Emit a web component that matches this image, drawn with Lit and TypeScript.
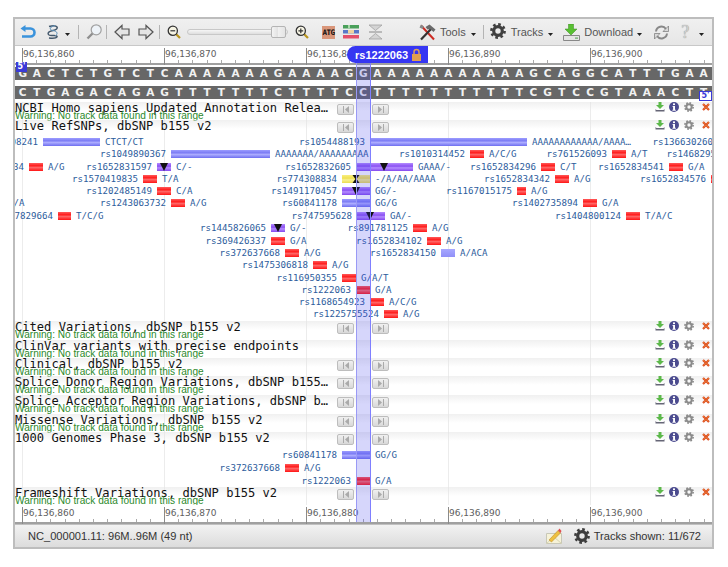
import {LitElement, html, css, nothing} from 'lit';
import {customElement, property} from 'lit/decorators.js';

const TOP = 'GACTCTGTCTCAAAAAAAGAAAAGGAAAAAAAAAAAGCAGGCATTTGAA';
const PAIR: Record<string, string> = {A: 'T', T: 'A', G: 'C', C: 'G'};
const BOTTOM = [...TOP].map((c) => PAIR[c]).join('');

const caret = html`<svg class="caret" width="5" height="3" viewBox="0 0 5 3"><path d="M0 0H5L2.5 3Z" fill="#222" /></svg>`;

const gear = (size: number, color: string) => html`<svg width=${size} height=${size} viewBox="0 0 16 16">
  <circle cx="8" cy="8" r="6.6" fill="none" stroke=${color} stroke-width="2.6" stroke-dasharray="2.6 2.58" />
  <circle cx="8" cy="8" r="4.3" fill="none" stroke=${color} stroke-width="3.2" />
</svg>`;

// small icons on the right of a track header
const actions = html`<div class="actions">
  <svg width="10" height="10" viewBox="0 0 10 10">
    <path d="M3.5 0H6.5V3H9L5 7 1 3H3.5Z" fill="#5cb84a" />
    <path d="M0.5 7V9.5H9.5V7L8.5 8H1.5Z" fill="#667" />
  </svg>
  <svg class="a-info" width="10" height="10" viewBox="0 0 10 10">
    <circle cx="5" cy="5" r="5" fill="#4b4b8f" />
    <rect x="4" y="1.4" width="2" height="1.7" fill="#fff" />
    <path d="M3.6 4H6V7.8H6.8V8.8H3.4V7.8H4.1V5H3.6Z" fill="#fff" />
  </svg>
  <span class="a-gear">${gear(10, '#8a8a8a')}</span>
  <svg class="a-close" width="8" height="8" viewBox="0 0 8 8">
    <path d="M1 1L7 7M7 1L1 7" stroke="#dd4a20" stroke-width="2.2" />
    <path d="M1 1L7 7M7 1L1 7" stroke="#f0b040" stroke-width="0.7" stroke-dasharray="1 1" />
  </svg>
</div>`;

@customElement('gv-ruler')
export class GvRuler extends LitElement {
  static override styles = css`
    :host {
      display: block;
      height: 19px;
      background: #fff;
    }
    .scale {
      display: flex;
      height: 17px;
      padding-left: 7px;
      border-bottom: 2px solid #a0a0a0;
      background: repeating-linear-gradient(90deg, #aaa 0 1px, transparent 1px 14.2px) 7px 100% / 100% 3px no-repeat;
    }
    .major {
      flex: none;
      width: 142px;
      box-sizing: border-box;
      margin-top: 2px;
      height: 17px;
      border-left: 1px solid #8a8a8a;
      font: 9px/12px 'DejaVu Sans', sans-serif;
      color: #5e5e5e;
    }
  `;

  override render() {
    const labels = ['96,136,860', '96,136,870', '96,136,880', '96,136,890', '96,136,900'];
    return html`<div class="scale">${labels.map((l) => html`<div class="major">${l}</div>`)}</div>`;
  }
}

type Feature = {y: number; name?: string; end?: number; x1?: number; x2?: number; color?: string; label?: string; lx?: number; mark?: string; mx?: number};

const bar = (y: number, name: string, end: number, x2: number, color: string, label: string, mark?: string, mx?: number): Feature => ({
  y, name, end, x1: end + 5, x2, color, label, lx: x2 + 5, mark, mx,
});

const LIVE: Feature[] = [
  bar(142, 'rs1068808241', 38, 100, 'blue', 'CTCT/CT'),
  bar(142, 'rs1054488193', 365, 527, 'blue', 'AAAAAAAAAAAA/AAAA…'),
  {y: 142, name: 'rs136630260', end: 713},
  bar(154, 'rs1049890367', 166, 270, 'blue', 'AAAAAAA/AAAAAAAAA'),
  bar(154, 'rs1010314452', 465, 484, 'red', 'A/C/G'),
  bar(154, 'rs761526093', 607, 626, 'red', 'A/T'),
  {y: 154, name: 'rs146829510', end: 727},
  bar(167, 'rs934', 24, 43, 'red', 'A/G'),
  bar(167, 'rs1652831597', 152, 171, 'purple', 'C/-', 'down', 164),
  bar(167, 'rs1652832605', 351, 413, 'purple', 'GAAA/-', 'down', 384),
  bar(167, 'rs1652834296', 536, 555, 'red', 'C/T'),
  bar(167, 'rs1652834541', 664, 683, 'red', 'G/A'),
  bar(179, 'rs1570419835', 138, 157, 'red', 'T/A'),
  bar(179, 'rs774308834', 337, 370, 'yellow', '-/A/AA/AAAA', 'hour', 356),
  bar(179, 'rs1652834342', 550, 569, 'red', 'A/G'),
  bar(179, 'rs1652834576', 706, 725, 'red', ''),
  bar(191, 'rs1202485149', 152, 171, 'red', 'C/A'),
  bar(191, 'rs1491170457', 337, 370, 'purple', 'GG/-', 'down', 356),
  bar(191, 'rs1167015175', 512, 526, 'red', 'A/G'),
  {y: 203, label: 'T/A', lx: 8},
  bar(203, 'rs1243063732', 166, 185, 'red', 'A/G'),
  bar(203, 'rs60841178', 337, 370, 'blue', 'GG/G'),
  bar(203, 'rs1402735894', 578, 597, 'red', 'G/A'),
  bar(216, 'rs1317829664', 53, 71, 'red', 'T/C/G'),
  bar(216, 'rs747595628', 352, 385, 'purple', 'GA/-', 'down', 370),
  bar(216, 'rs1404800124', 621, 640, 'red', 'T/A/C'),
  bar(228, 'rs1445826065', 266, 285, 'purple', 'G/-', 'down', 278),
  bar(228, 'rs891781125', 408, 427, 'red', 'A/G'),
  bar(241, 'rs369426337', 266, 285, 'red', 'G/A'),
  bar(241, 'rs1652834102', 422, 441, 'red', 'A/G'),
  bar(253, 'rs372637668', 280, 299, 'red', 'A/G'),
  bar(253, 'rs1652834150', 436, 455, 'peri', 'A/ACA'),
  bar(265, 'rs1475306818', 308, 327, 'red', 'A/G'),
  bar(278, 'rs116950355', 337, 356, 'red', 'G/A/T'),
  bar(290, 'rs1222063', 351, 370, 'red', 'G/A'),
  bar(302, 'rs1168654923', 365, 384, 'red', 'A/C/G'),
  bar(314, 'rs1225755524', 379, 398, 'red', 'A/G'),
];

const GENOMES: Feature[] = [
  bar(455, 'rs60841178', 337, 370, 'blue', 'GG/G'),
  bar(468, 'rs372637668', 280, 299, 'red', 'A/G'),
  bar(481, 'rs1222063', 351, 370, 'red', 'G/A'),
];

@customElement('gv-track')
export class GvTrack extends LitElement {
  static override styles = css`
    :host {
      display: block;
      position: relative;
    }
    .hdr {
      display: flex;
      position: relative;
      background: linear-gradient(rgba(228, 228, 228, 0.55), rgba(255, 255, 255, 0) 9px);
    }
    .names {
      flex: none;
      width: 322px;
      white-space: nowrap;
    }
    .title {
      font: 12.1px/13px 'DejaVu Sans Mono', monospace;
      color: #111;
    }
    .warn {
      margin-top: -5px;
      font: 10.1px/11px 'Liberation Sans', sans-serif;
      color: #2c8a2c;
    }
    .pager {
      flex: none;
      width: 52px;
      display: flex;
      justify-content: space-between;
      align-self: flex-start;
      margin-top: 2px;
    }
    .pbtn {
      width: 15px;
      height: 9px;
      border: 1px solid #bdbdbd;
      border-radius: 2px;
      background: linear-gradient(#f0f0f0, #d8d8d8);
      display: flex;
      align-items: center;
      justify-content: center;
    }
    .actions {
      position: absolute;
      right: 2px;
      top: 0;
      display: flex;
      align-items: center;
    }
    .a-info {
      margin-left: 4px;
    }
    .a-gear {
      margin-left: 5px;
      display: flex;
    }
    .a-close {
      margin-left: 8px;
    }
    .canvas {
      position: relative;
    }
    .f {
      position: absolute;
      height: 11px;
      white-space: nowrap;
      font: 9.15px/11px 'DejaVu Sans Mono', monospace;
      color: #2c5c9c;
    }
    .name {
      transform: translateX(-100%);
    }
    .bar {
      height: 8px;
    }
    .red {
      background: linear-gradient(#ff5a5a, #ff1c1c 35%, #ff6666 55%, #ff1414);
    }
    .blue {
      background: linear-gradient(#9c9cff, #7c7cf4 35%, #adadff 55%, #6e6ef0);
    }
    .purple {
      background: linear-gradient(#b48cff, #8a50f2 40%, #b48cff 60%, #8448ee);
    }
    .yellow {
      background: linear-gradient(#f8ee80, #f0e050 40%, #f8f090 60%, #ecdc50);
    }
    .peri {
      background: linear-gradient(#a8a8ff, #9090f8);
    }
    .mark {
      position: absolute;
    }
  `;

  @property() heading = '';
  @property({type: Number}) rowHeight = 18;
  @property({type: Number}) top = 0;
  @property({type: Boolean}) warning = false;
  @property({type: Boolean}) nopager = false;
  @property({attribute: false}) features: Feature[] = [];
  @property({type: Number}) canvasHeight = 0;

  private feature(f: Feature) {
    // features sit at coordinates of the whole window, the canvas starts below the header
    const origin = this.top + this.rowHeight;
    const left = 15;
    return html`
      ${f.name
        ? html`<div class="f name" style="left:${f.end! - left}px;top:${f.y - origin - 5}px">${f.name}</div>`
        : nothing}
      ${f.color
        ? html`<div class="f bar ${f.color}" style="left:${f.x1! - left}px;top:${f.y - origin - 4}px;width:${f.x2! - f.x1!}px"></div>`
        : nothing}
      ${f.mark === 'down'
        ? html`<svg class="mark" width="8" height="8" viewBox="0 0 8 8" style="left:${f.mx! - left - 4}px;top:${f.y - origin - 4}px"><path d="M0 0H8L4 8Z" fill="#111" /></svg>`
        : nothing}
      ${f.mark === 'hour'
        ? html`<svg class="mark" width="8" height="8" viewBox="0 0 8 8" style="left:${f.mx! - left - 4}px;top:${f.y - origin - 4}px"><path d="M0.5 0H7.5L4.6 4 7.5 8H0.5L3.4 4Z" fill="#111" /></svg>`
        : nothing}
      ${f.label
        ? html`<div class="f" style="left:${f.lx! - left}px;top:${f.y - origin - 5}px">${f.label}</div>`
        : nothing}
    `;
  }

  override render() {
    return html`
      <div class="hdr" style="height:${this.rowHeight}px">
        <div class="names">
          <div class="title">${this.heading}</div>
          ${this.warning ? html`<div class="warn">Warning: No track data found in this range</div>` : nothing}
        </div>
        ${this.nopager
          ? nothing
          : html`<div class="pager">
              <div class="pbtn"><svg width="8" height="7" viewBox="0 0 8 7"><path d="M1 0H2V7H1ZM7 0V7L3 3.5Z" fill="#aaa" /></svg></div>
              <div class="pbtn"><svg width="8" height="7" viewBox="0 0 8 7"><path d="M6 0H7V7H6ZM1 0V7L5 3.5Z" fill="#aaa" /></svg></div>
            </div>`}
        ${actions}
      </div>
      ${this.canvasHeight
        ? html`<div class="canvas" style="height:${this.canvasHeight}px">${this.features.map((f) => this.feature(f))}</div>`
        : nothing}
    `;
  }
}

@customElement('app-root')
export class AppRoot extends LitElement {
  static override styles = css`
    :host {
      display: block;
      width: 728px;
      height: 567px;
      background: #fff;
      overflow: hidden;
    }
    .frame {
      position: relative;
      box-sizing: border-box;
      width: 701px;
      height: 532px;
      margin: 17px 0 0 13px;
      border: 2px solid #bdbdbd;
      display: flex;
      flex-direction: column;
      background: #fff;
    }
    .toolbar {
      flex: none;
      height: 26px;
      display: flex;
      align-items: center;
      padding-left: 5px;
      background: linear-gradient(#f0f0f0, #e6e6e6);
      border-bottom: 1px solid #c8c8c8;
      font: 11px/14px 'Liberation Sans', sans-serif;
      color: #555;
    }
    .toolbar svg {
      flex: none;
    }
    .sep {
      flex: none;
      width: 1px;
      height: 14px;
      background: #b4b4b4;
    }
    .ml4 { margin-left: 4px; }
    .ml5 { margin-left: 5px; }
    .ml6 { margin-left: 6px; }
    .ml7 { margin-left: 7px; }
    .ml8 { margin-left: 8px; }
    .ml10 { margin-left: 10px; }
    .ml12 { margin-left: 12px; }
    .ml13 { margin-left: 13px; }
    .ml37 { margin-left: 37px; }
    .slider {
      flex: none;
      position: relative;
      width: 101px;
      height: 6px;
      border: 1px solid #c8c8c8;
      box-sizing: border-box;
      border-radius: 3px;
      background: linear-gradient(#f6f6f6, #dedede);
    }
    .thumb {
      position: absolute;
      left: 83px;
      top: -4px;
      width: 15px;
      height: 12px;
      box-sizing: border-box;
      border: 1px solid #b4b4b4;
      border-radius: 2px;
      background: linear-gradient(90deg, #f4f4f4, #e0e0e0 50%, #f0f0f0 50%, #e4e4e4);
    }
    .atg {
      flex: none;
      width: 13px;
      height: 13px;
      background: #d9967a;
      font: bold 7.6px/13px 'DejaVu Sans Mono', monospace;
      color: #111;
      text-align: center;
      letter-spacing: -0.6px;
    }
    .help {
      flex: none;
      width: 11px;
      font: 18px/20px 'Liberation Serif', serif;
      color: #d0d0d0;
      text-shadow: 0 0 1px #777;
    }
    .seq {
      flex: none;
      display: flex;
      height: 13px;
      padding-left: 0.6px;
      background: #676767;
      font: bold 10.5px/13px 'DejaVu Sans', sans-serif;
      color: #f2f2f2;
    }
    .seq.first {
      margin-top: 2px;
    }
    .seq.second {
      margin-top: 6px;
    }
    .seq span {
      flex: none;
      width: 14.2px;
      text-align: center;
    }
    .tracks {
      flex: none;
      position: relative;
      margin-top: 3px;
      overflow: hidden;
    }
    .grid {
      position: absolute;
      inset: 0;
      background: repeating-linear-gradient(90deg, #ececec 0 1px, transparent 1px 142px) 7px 0 / 142px 100%;
    }
    .footer {
      flex: 1;
      display: flex;
      align-items: center;
      padding-left: 13px;
      background: linear-gradient(#f2f2f2, #dcdcdc);
      border-top: 1px solid #c0c0c0;
      font: 11.1px/14px 'Liberation Sans', sans-serif;
      color: #333;
    }
    .grow {
      flex: 1;
    }
    .fnote {
      margin-right: 12px;
    }
    .fgear {
      display: flex;
      margin-right: 4px;
    }
    .fcount {
      margin-right: 11px;
    }
    /* the highlighted base, lies over the ruler and the tracks */
    .band {
      position: absolute;
      left: 341px;
      top: 27px;
      box-sizing: border-box;
      width: 15px;
      height: 476px;
      background: rgba(70, 70, 235, 0.22);
      border-right: 1px solid #7f7fff;
      border-left: 1px solid #9a9af5;
      pointer-events: none;
    }
    .flag {
      position: absolute;
      left: 332px;
      top: 27px;
      width: 81px;
      height: 17px;
      box-sizing: border-box;
      padding-left: 8px;
      display: flex;
      align-items: center;
      background: #3636f2;
      border-radius: 9px 0 0 9px;
      font: bold 11px/14px 'Liberation Sans', sans-serif;
      color: #fff;
    }
    .flag svg {
      margin-left: 3px;
    }
    .end {
      position: absolute;
      height: 10px;
      box-sizing: border-box;
      border: 1px solid #3a3ad8;
      font: bold 8px/8px 'DejaVu Sans', sans-serif;
      text-align: center;
    }
    .end-l {
      left: 1px;
      top: 43px;
      width: 11px;
      background: #3a3ad8;
      color: #fff;
    }
    .end-r {
      right: 0;
      top: 72px;
      width: 13px;
      background: #fff;
      color: #3a3ad8;
    }
  `;

  private toolbar() {
    return html`<div class="toolbar">
      <svg width="16" height="15" viewBox="0 0 16 15">
        <path d="M4 3.5H10.5a4 4 0 0 1 0 8H2" fill="none" stroke="#3a93dc" stroke-width="2.6" />
        <path d="M5.5 0V7L0.5 3.5Z" fill="#3a93dc" />
      </svg>
      <svg class="ml10" width="14" height="16" viewBox="0 0 14 16">
        <path d="M3 2.5C12 0 14 5 7 6.5C0 8 1 12 7 11.5C13 11 13 15 3 14" fill="none" stroke="#44586c" stroke-width="1.4" />
        <path d="M9 1.5C3 3 3 6 7 6.5C12 7.5 12 10 9 12" fill="none" stroke="#5b8fb8" stroke-width="1" />
      </svg>
      <span class="ml5">${caret}</span>
      <div class="sep ml8"></div>
      <svg class="ml7" width="16" height="16" viewBox="0 0 16 16">
        <circle cx="10.2" cy="5.8" r="5" fill="#eef3f8" stroke="#a0a0a0" stroke-width="1.2" />
        <path d="M6.5 9.5L1.5 14.5" stroke="#8f8f8f" stroke-width="2.4" />
      </svg>
      <div class="sep ml4"></div>
      <svg class="ml7" width="16" height="16" viewBox="0 0 16 16">
        <path d="M1 8L8 1.5V5H15V11H8V14.5Z" fill="#e4e4e4" stroke="#555" stroke-width="1.2" />
      </svg>
      <svg class="ml8" width="16" height="16" viewBox="0 0 16 16">
        <path d="M15 8L8 1.5V5H1V11H8V14.5Z" fill="#e4e4e4" stroke="#555" stroke-width="1.2" />
      </svg>
      <div class="sep ml5"></div>
      <svg class="ml7" width="14" height="14" viewBox="0 0 14 14">
        <path d="M8.5 8.5L13 13" stroke="#b8941e" stroke-width="2.2" />
        <circle cx="5.8" cy="5.8" r="4.6" fill="#f6f4e4" stroke="#333" stroke-width="1.3" />
        <path d="M3.4 5.8H8.2" stroke="#333" stroke-width="1.2" />
      </svg>
      <div class="slider ml6"><div class="thumb"></div></div>
      <svg class="ml7" width="14" height="14" viewBox="0 0 14 14">
        <path d="M8.5 8.5L13 13" stroke="#b8941e" stroke-width="2.2" />
        <circle cx="5.8" cy="5.8" r="4.6" fill="#f6f4e4" stroke="#333" stroke-width="1.3" />
        <path d="M3.4 5.8H8.2M5.8 3.4V8.2" stroke="#333" stroke-width="1.2" />
      </svg>
      <div class="atg ml13">ATG</div>
      <svg class="ml8" width="16" height="14" viewBox="0 0 16 14">
        <rect x="0" y="0" width="16" height="3.5" fill="#4aa05a" />
        <rect x="0" y="5" width="16" height="3.5" fill="#5a78c8" />
        <rect x="0" y="10" width="16" height="3.5" fill="#e4506a" />
        <rect x="5" y="5" width="6" height="3.5" fill="#f0d4a0" />
        <rect x="5" y="0" width="2" height="3.5" fill="#a8d8a8" />
      </svg>
      <svg class="ml10" width="13" height="16" viewBox="0 0 13 16">
        <path d="M0 1H13L6.5 6.5ZM0 15H13L6.5 9.5Z" fill="#d4d4d4" stroke="#9a9a9a" stroke-width="0.7" />
        <path d="M0 8H13" stroke="#888" stroke-width="1" />
      </svg>
      <svg class="ml37" width="17" height="17" viewBox="0 0 17 17">
        <path d="M2 1.5L15 15.5" stroke="#cc2a22" stroke-width="2" />
        <path d="M13 4L2 15.5" stroke="#333" stroke-width="2.2" />
        <path d="M6.5 3L10.5 0.5L16.5 5.5L14.5 8L11 5L8.5 5.5Z" fill="#6a6a6a" />
        <path d="M0.5 3.5L2 0.5L5 2.5L3.5 5Z" fill="#888" />
      </svg>
      <span class="ml4">Tools</span>
      <span class="ml5">${caret}</span>
      <div class="sep ml7"></div>
      <span class="ml6">${gear(16, '#404040')}</span>
      <span class="ml5">Tracks</span>
      <span class="ml5">${caret}</span>
      <svg class="ml10" width="17" height="17" viewBox="0 0 17 17">
        <path d="M5.5 0H10.5V5H14L8 11 2 5H5.5Z" fill="#58c032" stroke="#3a8a20" stroke-width="0.5" />
        <path d="M0.5 11.5H16.5V16.5H0.5Z" fill="#e4e4e4" stroke="#888" stroke-width="1" />
        <rect x="12" y="13.5" width="3" height="1.2" fill="#6a6" />
      </svg>
      <span class="ml4">Download</span>
      <span class="ml4">${caret}</span>
      <svg class="ml12" width="15" height="15" viewBox="0 0 15 15">
        <path d="M2 6.5A5.5 5.5 0 0 1 12 4M13 8.5A5.5 5.5 0 0 1 3 11" fill="none" stroke="#888" stroke-width="2" />
        <path d="M14.5 1V6.5H9ZM0.5 14V8.5H6Z" fill="#d8d8d8" stroke="#777" stroke-width="0.7" />
      </svg>
      <span class="help ml12">?</span>
      <span class="ml7">${caret}</span>
    </div>`;
  }

  override render() {
    return html`<div class="frame">
      ${this.toolbar()}
      <gv-ruler></gv-ruler>
      <div class="seq first">${[...TOP].map((c) => html`<span>${c}</span>`)}</div>
      <div class="seq second">${[...BOTTOM].map((c) => html`<span>${c}</span>`)}</div>
      <div class="tracks">
        <div class="grid"></div>
        <gv-track heading="NCBI Homo sapiens Updated Annotation Relea…" warning rowHeight="18" top="102"></gv-track>
        <gv-track heading="Live RefSNPs, dbSNP b155 v2" rowHeight="18" top="120" canvasHeight="183" .features=${LIVE}></gv-track>
        <gv-track heading="Cited Variations, dbSNP b155 v2" warning rowHeight="19" top="321"></gv-track>
        <gv-track heading="ClinVar variants with precise endpoints" warning nopager rowHeight="18" top="340"></gv-track>
        <gv-track heading="Clinical, dbSNP b155 v2" warning rowHeight="18" top="358"></gv-track>
        <gv-track heading="Splice Donor Region Variations, dbSNP b155…" warning rowHeight="19" top="376"></gv-track>
        <gv-track heading="Splice Acceptor Region Variations, dbSNP b…" warning rowHeight="19" top="395"></gv-track>
        <gv-track heading="Missense Variations, dbSNP b155 v2" warning rowHeight="18" top="414"></gv-track>
        <gv-track heading="1000 Genomes Phase 3, dbSNP b155 v2" rowHeight="18" top="432" canvasHeight="37" .features=${GENOMES}></gv-track>
        <gv-track heading="Frameshift Variations, dbSNP b155 v2" warning rowHeight="18" top="487"></gv-track>
      </div>
      <gv-ruler></gv-ruler>
      <div class="footer">
        <span>NC_000001.11: 96M..96M (49 nt)</span>
        <span class="grow"></span>
        <svg class="fnote" width="16" height="16" viewBox="0 0 16 16">
          <path d="M0.5 5.5H15.5V15.5H0.5Z" fill="#f6f2d8" stroke="#c8c8b8" stroke-width="1" />
          <path d="M0.5 15.5L8 9 15.5 15.5" fill="none" stroke="#d8d4b0" stroke-width="1" />
          <path d="M3 12L12 2.5L14.5 5L5.5 14Z" fill="#eec040" stroke="#b08020" stroke-width="0.5" />
          <path d="M12 2.5L13.5 0.5L15.5 3L14.5 5Z" fill="#e05050" />
        </svg>
        <span class="fgear">${gear(16, '#3c3c3c')}</span>
        <span class="fcount">Tracks shown: 11/672</span>
      </div>
      <div class="band"></div>
      <div class="flag">rs1222063<svg width="11" height="14" viewBox="0 0 11 14">
        <path d="M3 6V4a2.5 2.5 0 0 1 5 0V6" fill="none" stroke="#d8a060" stroke-width="1.5" />
        <rect x="1" y="6" width="9" height="7" fill="#e0a050" />
      </svg></div>
      <div class="end end-l">5'</div>
      <div class="end end-r">5'</div>
    </div>`;
  }
}

declare global {
  interface HTMLElementTagNameMap {
    'app-root': AppRoot;
    'gv-ruler': GvRuler;
    'gv-track': GvTrack;
  }
}
